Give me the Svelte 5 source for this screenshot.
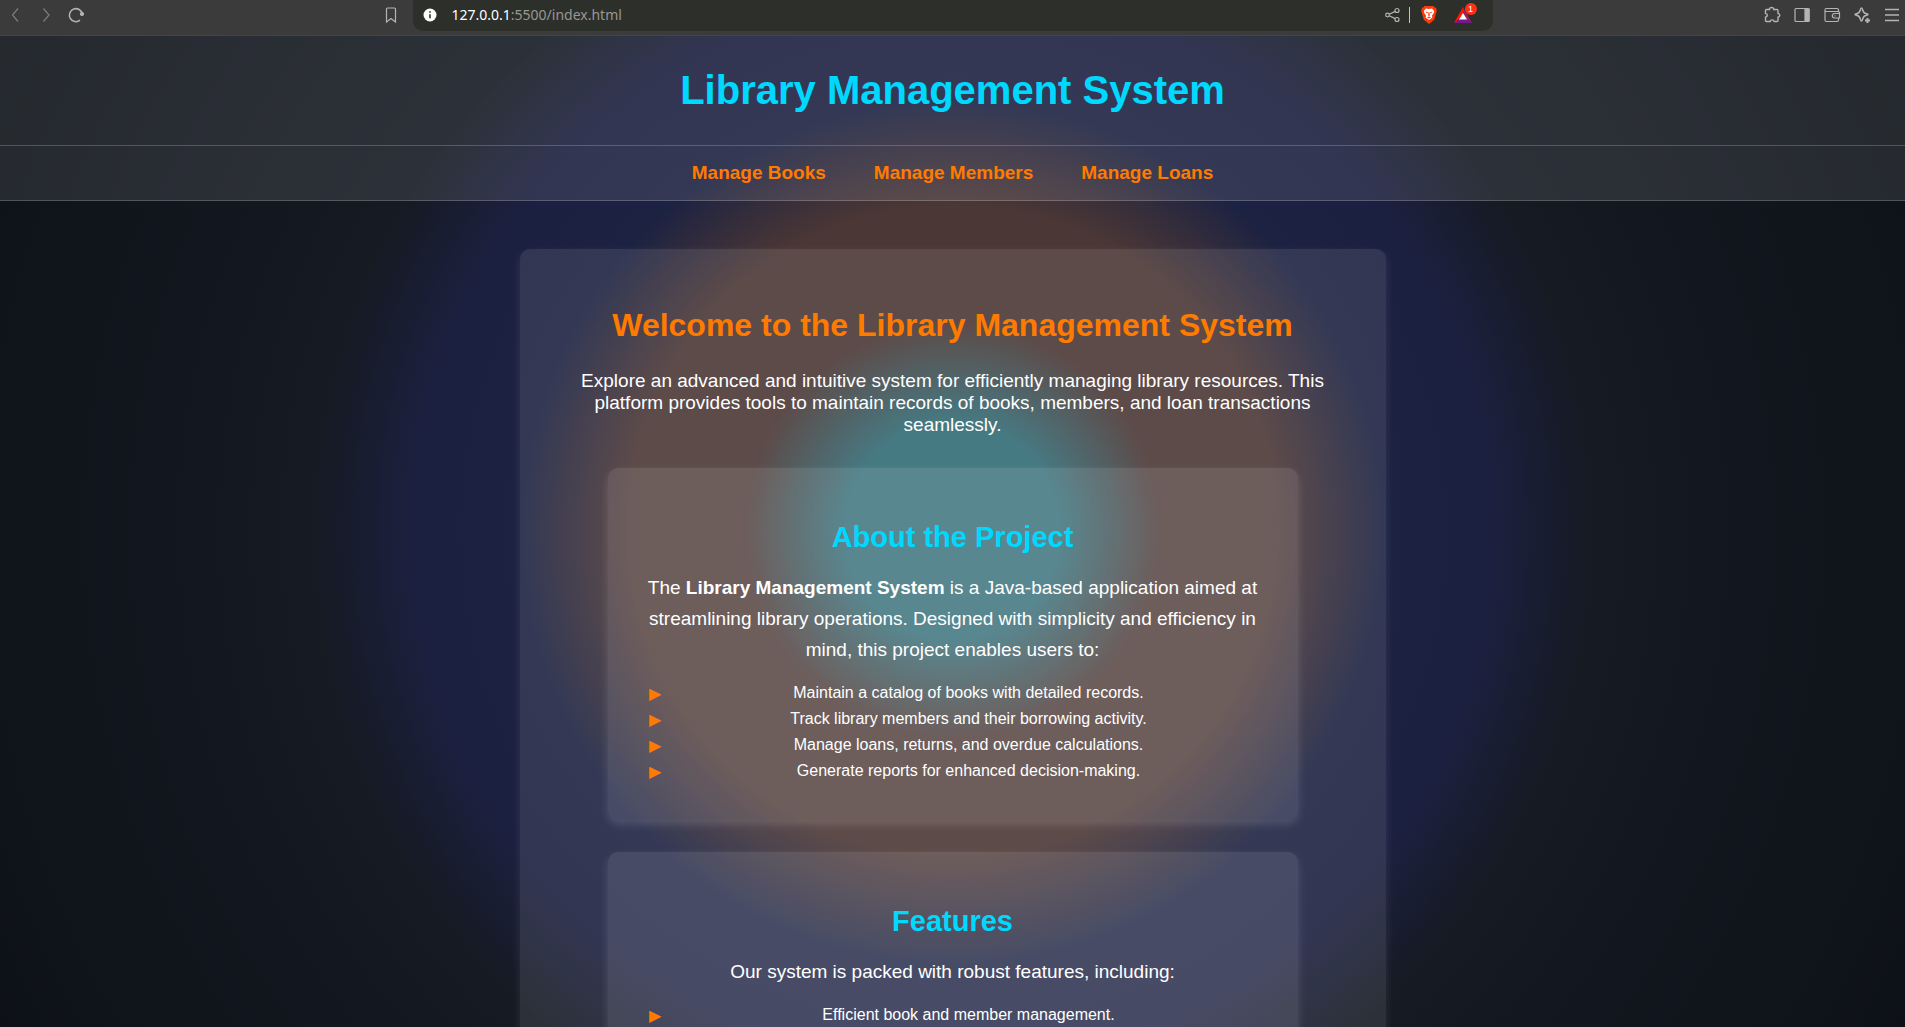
<script>
  const navItems = ['Manage Books', 'Manage Members', 'Manage Loans'];
  const aboutItems = [
    'Maintain a catalog of books with detailed records.',
    'Track library members and their borrowing activity.',
    'Manage loans, returns, and overdue calculations.',
    'Generate reports for enhanced decision-making.'
  ];
  const featureItems = ['Efficient book and member management.'];
</script>

<div class="window">
  <div class="toolbar">
    <div class="group left">
      <button aria-label="Back" class="dim"><svg viewBox="0 0 20 20"><path d="M12 3.500 6.500 10l5.500 6.500" /></svg></button>
      <button aria-label="Forward" class="dim"><svg viewBox="0 0 20 20"><path d="m7.500 3.500 5.500 6.500-5.500 6.500" /></svg></button>
      <button aria-label="Reload"><svg viewBox="0 0 20 20"><path d="M14 15.200A6.500 6.500 0 1 1 16.300 9" stroke-width="1.500" /><circle cx="16" cy="9" r="1.500" fill="currentColor" /></svg></button>
    </div>
    <div class="group mark">
      <button aria-label="Bookmark"><svg viewBox="0 0 20 20"><path d="M5.500 4q0-1 1-1h7q1 0 1 1v13L10 13.500 5.500 17z" /></svg></button>
    </div>
    <div class="address">
      <button aria-label="Site information" class="info"><svg viewBox="0 0 20 20"><circle cx="10" cy="10" r="6.500" fill="#fff" stroke="none" /><path d="M10 9.300v4M10 6.300v1.500" stroke="#2d2f2b" stroke-width="1.600" /></svg></button>
      <a class="url" href="#top"><span>127.0.0.1</span>:5500/index.html</a>
      <button aria-label="Share"><svg viewBox="0 0 20 20"><circle cx="4.500" cy="10" r="1.800" /><circle cx="14" cy="5.500" r="2" /><circle cx="14" cy="14.500" r="2" /><path d="m6.200 9.200 6-2.800M6.200 10.800l6 2.800" /></svg></button>
      <i class="rule"></i>
      <button aria-label="Shields" class="brave"><svg viewBox="0 0 20 20"><path fill="#fb3a0c" d="M5.500 1h9l1.200 1.400 1.400.300L17.800 6l-.600 1.800-2 7L10 19l-5.200-4.200-2-7L2.200 6l.700-3.300 1.400-.300z" /><path fill="#fff" d="m10 4 3-.500L15.200 6l-.700 2.500-1.700 2.300.700 1.600-3.500 2.600-3.500-2.600.700-1.600-1.700-2.300L4.800 6 7 3.500z" /><path fill="#fb3a0c" d="m6.300 6.400 2.600.800-.700 1.200zM13.700 6.400l-2.600.800.700 1.200zM9.600 7h.8l.5 3.500-.9.500-.9-.500zM8 12.300l2-.900 2 .900-2 1.300z" /></svg></button>
      <button aria-label="Rewards, 1 notification" class="rewards"><svg viewBox="0 0 20 20"><path fill="#ff1500" d="M10 2 1 18l9-6z" /><path fill="#9e1f63" d="m10 2 9 16-9-6z" /><path fill="#7a168c" d="M1 18h18l-9-7z" /><path fill="#fff" d="m10 8 4 6.500H6z" /></svg><b>1</b></button>
    </div>
    <div class="group right">
      <button aria-label="Extensions"><svg viewBox="0 0 20 20"><path d="M4.500 4.500h3c-.700-2.700 4.900-2.700 4.200 0h3.300q1 0 1 1v3c2.400.300 2.400 3.300 0 3.700v3.300q0 1-1 1h-2.800c-.500-2.200-3.500-2.200-4 0H4.500q-1 0-1-1v-3.300c2.400-.400 2.400-3.400 0-3.700v-3q0-1 1-1z" stroke-width="1.400" /></svg></button>
      <button aria-label="Sidebar"><svg viewBox="0 0 20 20"><rect x="3" y="3.500" width="14" height="13" rx="1" /><path fill="currentColor" d="M13 4h4v12h-4z" /></svg></button>
      <button aria-label="Wallet"><svg viewBox="0 0 20 20"><path d="M16.500 7V5q0-1.500-1.500-1.500H4.500Q3 3.500 3 5v10q0 1.500 1.500 1.500H15q1.500 0 1.500-1.500v-2M3 6.500h13q1.500 0 1.500 1v5.500h-5q-2.200-.300-2.200-2.300t2.200-2.200h5M12.500 10.800h1" /></svg></button>
      <button aria-label="Assistant"><svg viewBox="0 0 20 20"><path d="M9.500 3q.7 0 1 1.500.7 3.500 4 4.200 1.500.3 1.500.8t-1.500.8q-3.300.7-4 4.200-.3 1.500-1 1.500t-1-1.500q-.7-3.500-4-4.200Q3 10 3 9.500t1.500-.8q3.300-.7 4-4.200.3-1.500 1-1.500z" stroke-width="1.400" /><path d="M15.500 13v5M13 15.500h5" stroke-width="2" /></svg></button>
      <button aria-label="Menu"><svg viewBox="0 0 20 20"><path d="M3 4.500h14M3 10h14M3 15.500h14" stroke-width="1.400" /></svg></button>
    </div>
  </div>

  <div class="page" id="top">
    <header><h1>Library Management System</h1></header>
    <nav>
      {#each navItems as item}<a href="#top">{item}</a>{/each}
    </nav>
    <main>
      <h2>Welcome to the Library Management System</h2>
      <p>Explore an advanced and intuitive system for efficiently managing library resources. This platform provides tools to maintain records of books, members, and loan transactions seamlessly.</p>
      <section>
        <h3>About the Project</h3>
        <p>The <strong>Library Management System</strong> is a Java-based application aimed at streamlining library operations. Designed with simplicity and efficiency in mind, this project enables users to:</p>
        <ul>
          {#each aboutItems as item}<li>{item}</li>{/each}
        </ul>
      </section>
      <section>
        <h3>Features</h3>
        <p>Our system is packed with robust features, including:</p>
        <ul>
          {#each featureItems as item}<li>{item}</li>{/each}
        </ul>
      </section>
    </main>
  </div>
</div>

<style>
  :global(body) {
    margin: 0;
    background: #0d1117;
  }
  .window {
    height: 100vh;
    display: flex;
    flex-direction: column;
    overflow: hidden;
    font-family: "Liberation Sans", Arial, sans-serif;
    color: #fff;
  }
  .toolbar {
    flex: none;
    height: 35px;
    display: grid;
    grid-template-columns: 1fr 1080px 1fr;
    background: #3b3b3b;
    border-bottom: 1px solid #454545;
    color: #b4b4b4;
  }
  .group {
    display: flex;
    align-items: center;
    gap: 10px;
    height: 30px;
  }
  .left {
    grid-area: 1 / 1;
    padding-left: 6px;
  }
  .mark {
    grid-area: 1 / 1;
    justify-self: end;
    padding-right: 12px;
  }
  .right {
    justify-content: flex-end;
    padding-right: 3px;
  }
  button {
    flex: none;
    width: 20px;
    height: 20px;
    padding: 0;
    border: 0;
    background: none;
    color: inherit;
  }
  .dim {
    color: #7c7c7c;
  }
  svg {
    display: block;
    width: 20px;
    height: 20px;
    fill: none;
    stroke: currentColor;
    stroke-width: 1.2;
  }
  .brave svg,
  .rewards svg {
    stroke: none;
  }
  .address {
    display: flex;
    align-items: center;
    height: 31px;
    padding: 0 20px 1px 7px;
    box-sizing: border-box;
    border-radius: 0 0 10px 10px;
    background: #2d2f2b;
  }
  .url {
    flex: 1;
    margin-left: 12px;
    font: 14px/20px "Noto Sans", sans-serif;
    color: #969894;
    text-decoration: none;
  }
  .url span {
    color: #fff;
  }
  .rule {
    width: 1px;
    height: 16px;
    margin: 0 9px 0 6px;
    background: #c4c4c4;
  }
  .rewards {
    position: relative;
    margin-left: 14px;
  }
  .rewards b {
    position: absolute;
    top: -2px;
    right: -4px;
    width: 12px;
    height: 12px;
    border-radius: 6px;
    background: #ff3314;
    color: #fff;
    font: 9px/12px "Liberation Sans", sans-serif;
  }
  .page {
    flex: 1;
    min-height: 0;
    overflow: hidden;
    text-align: center;
    background: radial-gradient(
      circle at center,
      #326b75 0,
      #326b75 108px,
      #4b3735 208px,
      #4b3735 325px,
      #1c2242 432px,
      #1c2040 535px,
      #151a23 640px,
      #0d1117 1080px
    );
  }
  header {
    padding: 31px 0 32px;
    background: rgba(255, 255, 255, 0.1);
    border-bottom: 1px solid rgba(255, 255, 255, 0.2);
  }
  h1 {
    margin: 0;
    font-size: 40px;
    line-height: 46px;
    color: #00d9ff;
  }
  nav {
    display: flex;
    justify-content: center;
    gap: 48px;
    padding: 16px 0;
    background: rgba(255, 255, 255, 0.1);
    border-bottom: 1px solid rgba(255, 255, 255, 0.2);
  }
  nav a {
    font-size: 19px;
    line-height: 22px;
    font-weight: bold;
    color: #ff7b00;
    text-decoration: none;
  }
  main {
    max-width: 770px;
    margin: 48px auto;
    padding: 48px;
    border-radius: 10px;
    background: rgba(255, 255, 255, 0.1);
    box-shadow: 0 4px 10px rgba(255, 255, 255, 0.1);
  }
  h2 {
    margin: 10px 0 26px;
    font-size: 32px;
    line-height: 37px;
    color: #ff7b00;
  }
  p {
    margin: 0;
    font-size: 19px;
    line-height: 22px;
  }
  section {
    max-width: 616px;
    margin: 32px auto 0;
    padding: 48px 37px 32px;
    border-radius: 10px;
    background: rgba(255, 255, 255, 0.1);
    box-shadow: 0 4px 10px rgba(255, 255, 255, 0.15);
  }
  h3 {
    margin: 5px 0 18px;
    font-size: 29px;
    line-height: 33px;
    color: #00d9ff;
  }
  section p {
    line-height: 31px;
  }
  ul {
    list-style: none;
    margin: 19px 0 0;
    padding: 0;
  }
  li {
    position: relative;
    margin-bottom: 8px;
    padding-left: 32px;
    font-size: 16px;
    line-height: 18px;
  }
  li::before {
    content: "▶";
    position: absolute;
    left: 4px;
    top: 1px;
    color: #ff7b00;
  }
</style>
